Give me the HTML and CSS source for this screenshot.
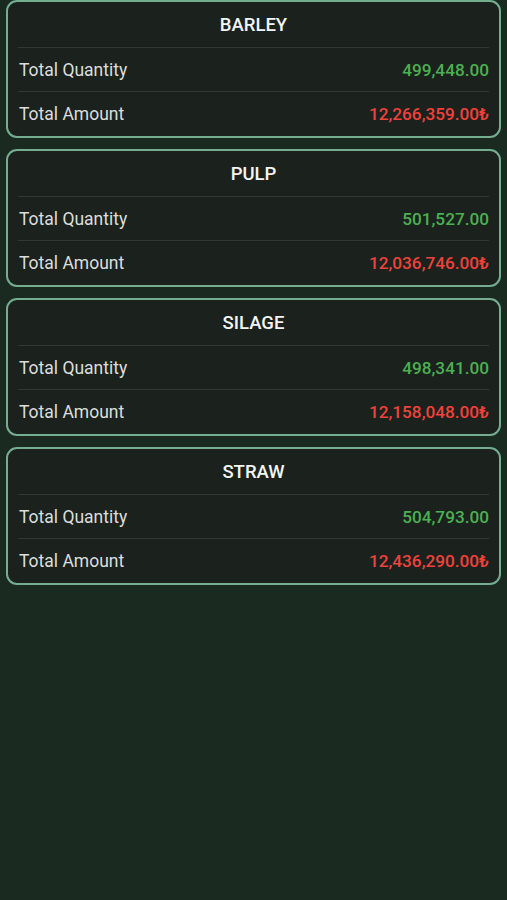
FILE: index.html
```html
<!DOCTYPE html>
<html lang="en">
  <head>
    <meta charset="UTF-8" />
    <meta name="viewport" content="width=device-width, initial-scale=1.0" />
    <title>Feed Summary</title>
    <link rel="stylesheet" href="styles.css">
  </head>
  <body>
    <div class="list">
      <div class="card">
        <div class="card-title">BARLEY</div>
        <div class="row">
          <span class="label">Total Quantity</span>
          <span class="qty">499,448.00</span>
        </div>
        <div class="row">
          <span class="label">Total Amount</span>
          <span class="amount">12,266,359.00₺</span>
        </div>
      </div>

      <div class="card">
        <div class="card-title">PULP</div>
        <div class="row">
          <span class="label">Total Quantity</span>
          <span class="qty">501,527.00</span>
        </div>
        <div class="row">
          <span class="label">Total Amount</span>
          <span class="amount">12,036,746.00₺</span>
        </div>
      </div>

      <div class="card">
        <div class="card-title">SILAGE</div>
        <div class="row">
          <span class="label">Total Quantity</span>
          <span class="qty">498,341.00</span>
        </div>
        <div class="row">
          <span class="label">Total Amount</span>
          <span class="amount">12,158,048.00₺</span>
        </div>
      </div>

      <div class="card">
        <div class="card-title">STRAW</div>
        <div class="row">
          <span class="label">Total Quantity</span>
          <span class="qty">504,793.00</span>
        </div>
        <div class="row">
          <span class="label">Total Amount</span>
          <span class="amount">12,436,290.00₺</span>
        </div>
      </div>
    </div>
  </body>
</html>
```

FILE: styles.css
```css
body {
  margin: 0;
  background-color: #1b2a21;
  font-family: Roboto, "Noto Sans", sans-serif;
  color: #e2e4e2;
}

.list {
  display: flex;
  flex-direction: column;
  gap: 11px;
  padding: 0 6px;
}

.card {
  background-color: #1b221e;
  border: 2px solid #74ad90;
  border-radius: 11px;
  padding: 0 10px;
}

.card-title {
  height: 45px;
  line-height: 46px;
  text-align: center;
  font-size: 18.5px;
  font-weight: 500;
  color: #f4f4f4;
  border-bottom: 1px solid #2f3a34;
}

.row {
  display: flex;
  justify-content: space-between;
  align-items: center;
  height: 43px;
  padding: 0 0 0 1px;
  font-size: 17.5px;
}

.row + .row {
  height: 44px;
  border-top: 1px solid #2f3a34;
}

.label {
  color: #dcdedc;
}

.qty,
.amount {
  font-size: 17.2px;
  font-weight: 500;
}

.qty {
  color: #4cb050;
}

.amount {
  color: #f0413a;
}
```
